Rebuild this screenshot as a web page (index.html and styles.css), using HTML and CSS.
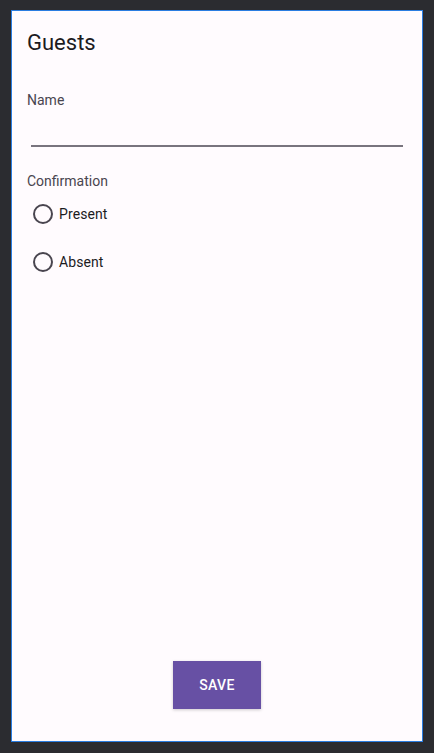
FILE: index.html
```html
<!DOCTYPE html>
<html>
<head>
<meta charset="utf-8">
<link rel="stylesheet" href="styles.css">
</head>
<body>
<div class="panel">
  <h1 class="title">Guests</h1>
  <div class="field">
    <label class="label">Name</label>
    <div class="input"></div>
  </div>
  <div class="group">
    <div class="label">Confirmation</div>
    <div class="radio"><span class="circle"></span><span class="rtext">Present</span></div>
    <div class="radio"><span class="circle"></span><span class="rtext">Absent</span></div>
  </div>
  <div class="spacer"></div>
  <div class="actions"><button class="save">SAVE</button></div>
</div>
</body>
</html>
```
FILE: styles.css
```css
html, body { margin: 0; padding: 0; }
body {
  background: #2b2c30;
  width: 434px;
  height: 753px;
  padding: 10px 11px;
  box-sizing: border-box;
  font-family: Roboto, "Liberation Sans", sans-serif;
}
.panel {
  width: 412px;
  height: 732px;
  box-sizing: border-box;
  border: 1px solid #2a7de1;
  background: #fffbfe;
  display: flex;
  flex-direction: column;
  padding: 18px 15px 32px 15px;
}
.title {
  margin: 0;
  font-size: 22px;
  line-height: 28px;
  font-weight: 400;
  color: #1c1b1f;
}
.field { margin-top: 33px; }
.label {
  font-size: 14px;
  line-height: 20px;
  color: #49454f;
}
.input {
  margin: 35px 4px 0 4px;
  height: 2px;
  background: #79747e;
}
.group { margin-top: 24px; }
.radio {
  display: flex;
  align-items: center;
  height: 48px;
}
.group .label + .radio { margin-top: -1px; }
.circle {
  width: 16px;
  height: 16px;
  border: 2px solid #49454f;
  border-radius: 50%;
  margin-left: 6px;
  margin-right: 6px;
}
.rtext {
  font-size: 14px;
  color: #1c1b1f;
  letter-spacing: 0.1px;
}
.spacer { flex: 1; }
.actions { display: flex; justify-content: center; }
.save {
  width: 88px;
  height: 48px;
  border: none;
  border-radius: 0;
  background: #6750a4;
  color: #ffffff;
  font-family: Roboto, "Liberation Sans", sans-serif;
  font-size: 14px;
  font-weight: 500;
  letter-spacing: 0.3px;
  box-shadow: 0 1px 3px rgba(0,0,0,0.2);
  padding: 0;
}
```
